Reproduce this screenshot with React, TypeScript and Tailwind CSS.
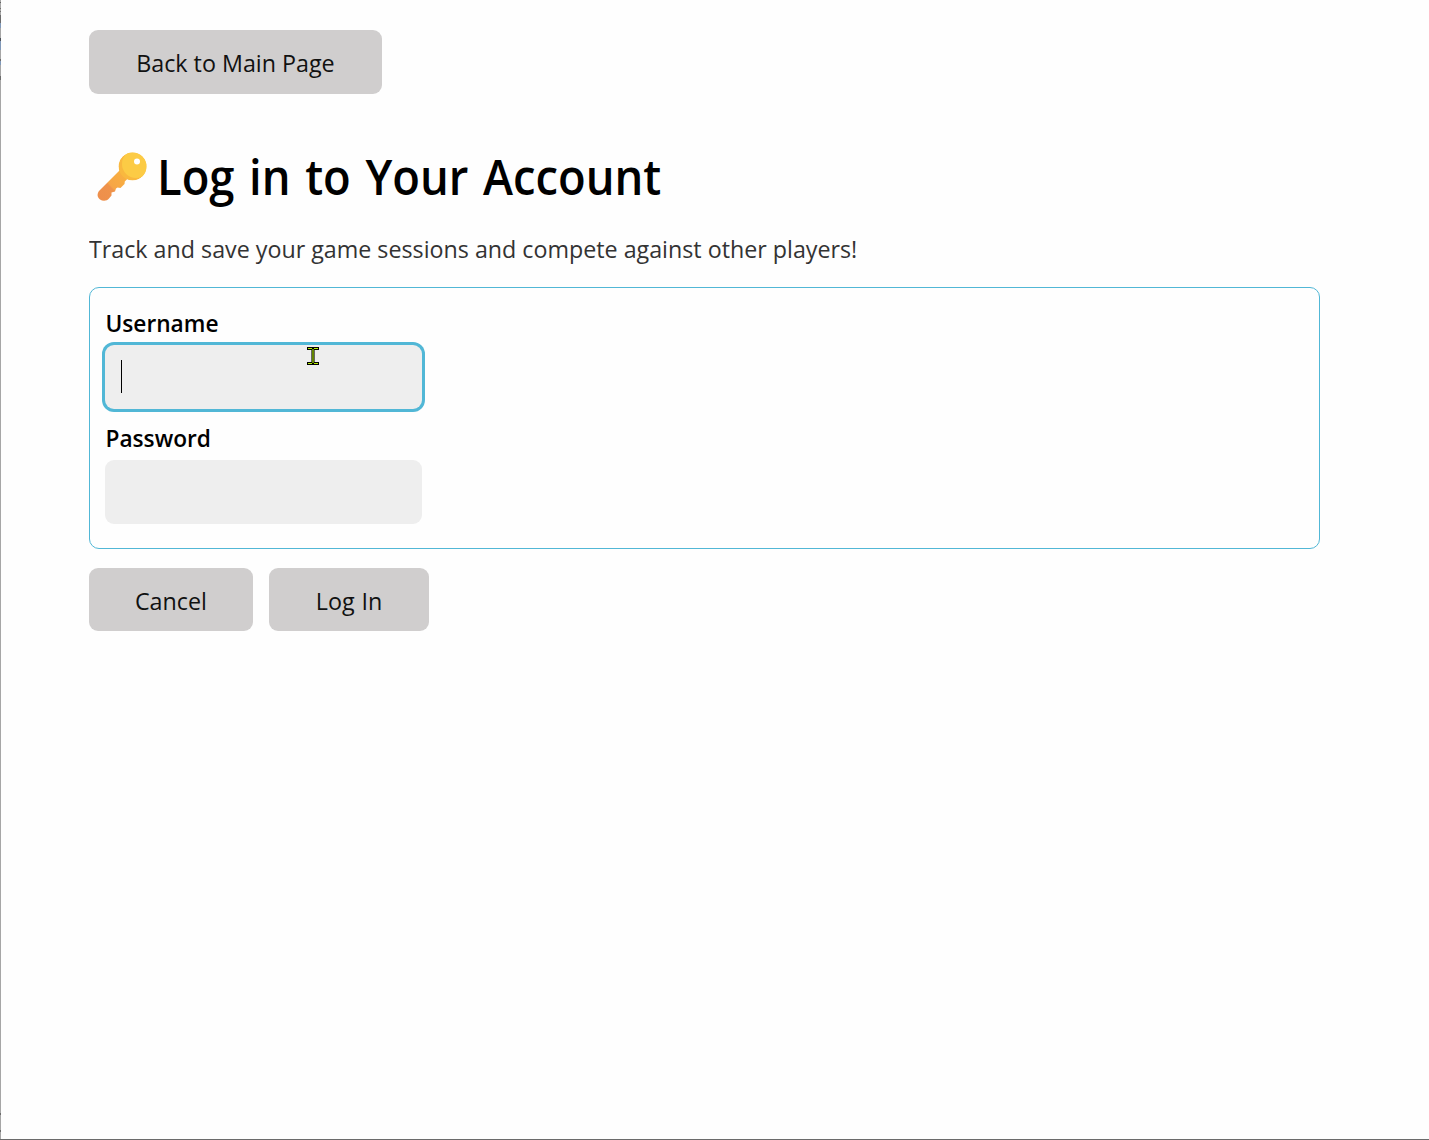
import type { ReactNode } from "react";

function Button({ className, children }: { className: string; children: ReactNode }) {
  return (
    <button type="button" className={`flex items-center justify-center rounded-[9px] bg-[#d0cece] pt-[2px] text-[24.5px] leading-[34px] whitespace-nowrap text-[#111] ${className}`}>
      <span className="inline-block scale-x-[0.95]">{children}</span>
    </button>
  );
}

function KeyIcon() {
  return (
    <svg className="h-[50px] w-[50px] shrink-0" viewBox="0 0 50 50" aria-hidden="true">
      <defs>
        <linearGradient id="shaft" x1="30" y1="20" x2="3" y2="46" gradientUnits="userSpaceOnUse">
          <stop offset="0" stopColor="#f9b23f" />
          <stop offset="0.56" stopColor="#f6a546" />
          <stop offset="0.6" stopColor="#ef934b" />
          <stop offset="1" stopColor="#ee8f4c" />
        </linearGradient>
        <clipPath id="bow"><circle cx="35.5" cy="14.5" r="14" /></clipPath>
      </defs>
      <path d="M23 18 2 39c-2 3-2 6 1 8.500 3 2 7 1.500 9-1l2.500-3v-3l3.500-1 1-3 1.500-1 3 .5 4-4 .3-2.500 3-3Z" fill="url(#shaft)" />
      <g clipPath="url(#bow)">
        <circle cx="35.500" cy="14.500" r="14" fill="#f9b83f" />
        <circle cx="39" cy="12" r="14" fill="#fccb45" />
      </g>
      <circle cx="40" cy="9.500" r="3" fill="#fff" />
    </svg>
  );
}

const edgeMarks = [
  { h: 2, c: "bg-[#a6a6a6]" },
  { h: 1, c: "bg-[#606060]" },
  { h: 5, c: "bg-[#a6a6a6]" },
  { h: 1, c: "bg-[#707070]" },
  { h: 2, c: "bg-[#a6a6a6]" },
  { h: 1, c: "bg-[#707070]" },
  { h: 3, c: "bg-[#a6a6a6]" },
  { h: 8, c: "bg-[#6b6b6b]" },
  { h: 5, c: "bg-[#8098b8]" },
  { h: 10, c: "bg-[#a6a6a6]" },
  { h: 3, c: "bg-[#4b5058]" },
  { h: 9, c: "bg-[#8098b8]" },
  { h: 9, c: "bg-[#a6a6a6]" },
  { h: 2, c: "bg-[#6b6b6b]" },
  { h: 4, c: "bg-[#8098b8]" },
  { h: 11, c: "bg-[#a6a6a6]" },
  { h: 4, c: "bg-[#6b6b6b]" },
  { h: 1033, c: "bg-[#a6a6a6]" },
  { h: 2, c: "bg-[#6b6b6b]" },
  { h: 15, c: "bg-[#a6a6a6]" },
  { h: 2, c: "bg-[#6b6b6b]" },
];

export default function App() {
  return (
    <div className="flex h-[1140px] w-[1429px] overflow-hidden border-b border-b-[#6b6b6b] bg-[#fefefe] font-['Open_Sans',sans-serif]">
      <div className="flex w-px shrink-0 flex-col bg-[#a6a6a6]">
        {edgeMarks.map((m, i) => (
          <span key={i} className={`shrink-0 ${m.c}`} style={{ height: m.h }} />
        ))}
      </div>
      <main className="min-w-0 flex-1 pt-[30px] pr-[109px] pl-[88px]">
        <Button className="h-16 w-[293px]">Back to Main Page</Button>

        <h1 className="mt-[50px] flex h-[66px] items-center gap-[10px] pl-[8px] text-[48px] leading-[66px] font-[560] whitespace-nowrap text-black">
          <KeyIcon />
          <span className="inline-block origin-left scale-x-[0.945] [word-spacing:3px]">Log in to Your Account</span>
        </h1>
        <p className="mt-[22px] h-[34px] w-max origin-left scale-x-[0.949] text-[24.5px] leading-[34px] whitespace-nowrap text-[#333]">
          Track and save your game sessions and compete against other players!
        </p>

        <form className="mt-[21px] h-[262px] rounded-[10px] border border-[#51b7d6] pt-[18px] pl-[15px] text-[24px] font-semibold text-black">
          <label htmlFor="username" className="block h-[34px] w-max origin-left scale-x-[0.945] pl-[0.5px] leading-[34px]">Username</label>
          <div id="username" className="relative mt-[5px] flex h-16 w-[317px] items-center rounded-[9px] bg-[#eee] pl-4 ring-3 ring-[#51b7d6]">
            <span className="mb-px h-[33px] w-px bg-black" />
            <svg className="absolute top-[2px] left-[202px] h-[18px] w-3" viewBox="0 0 12 18" shapeRendering="crispEdges" aria-hidden="true">
              <path d="M0 0h12v3H8v12h4v3H0v-3h4V3H0Z" fill="#000" />
              <path d="M1 1h4v1H1Zm6 0h4v1H7ZM1 16h4v1H1Zm6 0h4v1H7Z" fill="#b5ee00" />
              <path d="M4 3h4v12H4Z" fill="#666" />
              <path d="M5 2h2v14H5Z" fill="#648500" />
            </svg>
          </div>
          <label htmlFor="password" className="mt-[12px] block h-[34px] w-max origin-left scale-x-[0.945] pl-[0.5px] leading-[34px]">Password</label>
          <div id="password" className="mt-[5px] h-16 w-[317px] rounded-[9px] bg-[#eee]" />
        </form>

        <div className="mt-[19px] flex gap-4">
          <Button className="h-[63px] w-[164px]">Cancel</Button>
          <Button className="h-[63px] w-[160px] pl-px [word-spacing:1px]">Log In</Button>
        </div>
      </main>
    </div>
  );
}
